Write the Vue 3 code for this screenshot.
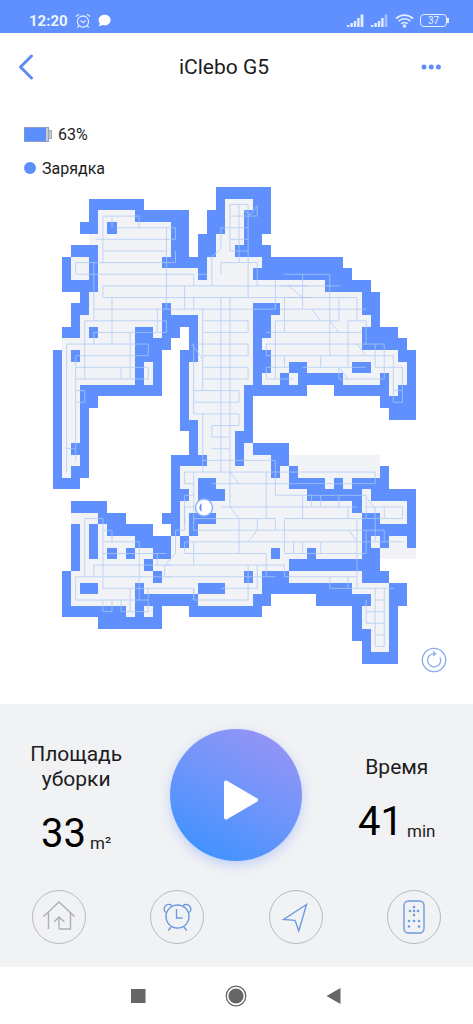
<template>
  <div class="app">
    <div class="status">
      <span class="hora">12:20</span>
      <svg class="alarma" width="16" height="16" viewBox="0 0 16 16">
        <circle cx="8" cy="8.6" r="5.6" />
        <path d="M1 3.6L4 1.2M15 3.6L12 1.2M3.6 13L2.4 14.6M12.4 13L13.6 14.6M5.6 7.6L8 9.6L10.6 7.6" />
      </svg>
      <svg class="chat" width="13" height="13" viewBox="0 0 13 13">
        <path d="M6.7 0.8C10 .8 12.6 3 12.6 6S10 11.4 6.7 11.4C5.9 11.4 5.1 11.3 4.4 11L1 12.4L1.8 9.5C1 8.5.6 7.3.6 6C.6 3 3.4.8 6.7.8z" />
      </svg>
      <div class="statusder">
        <svg v-for="s in senal" :key="s" width="18" height="14" viewBox="0 0 18 14">
          <path class="barra" d="M0 11h2.4v2H0zM3.4 9h2.4v4H3.4zM6.8 7h2.4v6H6.8zM10.2 4h2.4v9h-2.400z" />
          <path class="barra" :class="{ 'tenue': s === 2 }" d="M13.6 0.5h2.8V13h-2.8z" />
        </svg>
        <svg class="wifi" width="19" height="14" viewBox="0 0 19 14">
          <path d="M1 4.6C6 0 13 0 18 4.6M3.6 7.2C7 4 12 4 15.4 7.2M6.2 9.8C8 8 11 8 12.8 9.8" />
          <circle cx="9.5" cy="12" r="1" />
        </svg>
        <span class="pila">37</span>
      </div>
    </div>

    <header class="cabecera">
      <button class="atras" aria-label="Назад">
        <svg width="16" height="26" viewBox="0 0 16 26"><path d="M13.5 2L2.5 13L13.5 24" /></svg>
      </button>
      <h1 class="titulo">iClebo G5</h1>
      <button class="mas" aria-label="Меню">
        <svg width="20" height="6" viewBox="0 0 20 6">
          <circle cx="3" cy="3" r="2.5" />
          <circle cx="10.2" cy="3" r="2.5" />
          <circle cx="17.4" cy="3" r="2.5" />
        </svg>
      </button>
    </header>

    <div class="info">
      <div class="infolinea">
        <svg width="28" height="15" viewBox="0 0 28 15">
          <rect x="0.5" y="0.5" width="24" height="14" fill="#c9cbd0" stroke="#8fa0c8" />
          <rect x="0.5" y="1" width="21.5" height="13" fill="#5b8ffb" />
          <rect x="25" y="3.5" width="2.5" height="8" fill="#d2d2cf" stroke="#a9aaa8" />
        </svg>
        <span>63%</span>
      </div>
      <div class="infolinea">
        <i class="punto"></i>
        <span>Зарядка</span>
      </div>
    </div>

    <main class="mapacont">
      <svg class="mapa" viewBox="0 0 363 477">
        <g transform="scale(9.075 11.634)" shape-rendering="crispEdges">
          <path class="suelo" :d="celdas(suelo)" />
          <path class="pared" :d="celdas(pared)" />
        </g>
        <g transform="scale(9.075 11.634)">
          <path class="ruta" v-for="(r,i) in rutas" :key="i" :d="r" />
        </g>
        <circle cx="151" cy="320.5" r="8.5" fill="#fff" stroke="#8db4f4" stroke-width="1.5" />
        <path d="M148.5 316a6 6 0 0 0 0 9z" fill="#5f90fd" />
      </svg>
      <button class="recargar" aria-label="Обновить">
        <svg width="26" height="26" viewBox="0 0 26 26">
          <circle cx="13" cy="13" r="11.7" />
          <path d="M13 6.6A6.6 6.6 0 1 0 19 10.2M12 4.6L14.6 6.7L12.2 8.8" />
        </svg>
      </button>
    </main>

    <section class="panel">
      <div class="datos">
        <div class="dato">
          <p class="etiqueta">Площадь<br>уборки</p>
          <p class="valor">33<span class="unidad">m²</span></p>
        </div>
        <button class="play" aria-label="Старт">
          <svg width="36" height="42" viewBox="0 0 36 42">
            <path d="M3 3.5L33 21L3 38.5z" />
          </svg>
        </button>
        <div class="dato">
          <p class="etiqueta">Время</p>
          <p class="valor">41<span class="unidad">min</span></p>
        </div>
      </div>

      <div class="acciones">
        <button class="accion gris" aria-label="Домой">
          <svg width="34" height="34" viewBox="0 0 34 34">
            <path d="M1.5 16.5L17 2L32.5 16.5M6.5 12.5V29M17 29H28.5V12.5M17 29V17M12 22L17 17L22.5 22" />
          </svg>
        </button>
        <button class="accion" aria-label="Таймер">
          <svg width="34" height="34" viewBox="0 0 34 34">
            <circle cx="17.5" cy="16.5" r="11.5" />
            <path d="M16.5 9V18H22.5M5.6 12.5A4.3 4.3 0 1 1 12 5.7M29.4 12.5A4.3 4.3 0 1 0 23 5.7M11 27L8.3 30.5M24 27L26.7 30.5" />
          </svg>
        </button>
        <button class="accion" aria-label="Навигация">
          <svg width="34" height="34" viewBox="0 0 34 34">
            <path d="M27.5 4.5L4.5 19.5L16 20.3L19.8 31z" />
          </svg>
        </button>
        <button class="accion" aria-label="Пульт">
          <svg width="34" height="34" viewBox="0 0 34 34">
            <rect x="7" y="1" width="20" height="32" rx="4.5" />
            <circle class="tecla" v-for="(t,i) in teclas" :key="i" :cx="t[0]" :cy="t[1]" r="1.3" />
          </svg>
        </button>
      </div>
    </section>

    <nav class="barranav">
      <button aria-label="Недавние">
        <svg width="22" height="22" viewBox="0 0 22 22"><rect x="4" y="4" width="14.5" height="14" /></svg>
      </button>
      <button aria-label="Главная">
        <svg width="22" height="22" viewBox="0 0 22 22">
          <circle cx="11" cy="11" r="7.6" />
          <circle class="aro" cx="11" cy="11" r="9.8" />
        </svg>
      </button>
      <button aria-label="Назад">
        <svg width="22" height="22" viewBox="0 0 22 22"><path d="M3.5 11L17.5 3V19z" /></svg>
      </button>
    </nav>
  </div>
</template>

<script setup>
import { ref } from "vue";

let senal = ref([1, 2]);

let teclas = ref([
  [17, 7], [17, 11], [17, 15], [13, 11], [21, 11],
  [12, 21], [17, 21], [22, 21], [12, 26.5], [22, 26.5],
]);

// columnas ocupadas en cada fila del mapa (40 x 41)
let pared = ref([
  "18-23",
  "4-9 18 22-23",
  "4 9-14 17-18 21-23",
  "3-4 6 13-14 17-18 21-23",
  "13-14 16-17 21-22",
  "2-4 13-14 16-17 20-23",
  "1 4 12-16 23-31",
  "1 4 16 22-32",
  "1-4 30-34",
  "3 34-35",
  "2-3 12 22-24 34-35",
  "2 12-15 22-23 35",
  "1-2 4 9-10 12-13 15 22-23 34-37",
  "9-12 15 22 34-38",
  "0 2 9-11 14-15 22-23 38-39",
  "0 9 11 14 22-23 26-27 33-34 39",
  "0 9 11 14 22 25 27-31 36 39",
  "0 3-11 14 21-27 31-36 38-39",
  "0 3-4 14 21 36-39",
  "0 3 14 21 37-39",
  "0 3 14-15 21",
  "0 3 15 20-21",
  "0 2-3 15 20 22-25",
  "0 3 13-16 20 24-25",
  "0 2-3 13 24 26 36",
  "0-2 13 16-17 26-29 31 33-36",
  "13-14 16-18 28-33 35-39",
  "2-5 13 33 39",
  "5-7 12-13 15-17 34-35 39",
  "2 4 6-10 13 15 34-39",
  "2 4 9-12 14 34 36 39",
  "2 4 6 8 11-12 24 28 34-35",
  "2 10 26-35",
  "1 11 21 23-25 34-36",
  "1 3-4 9 16-18 23-32 37-38",
  "1 9-15 22-23 29-34 37-38",
  "1-7 9 11 15-22 33 37",
  "5-11 33 37",
  "33-34 37",
  "34 37",
  "34-37",
]);

let suelo = ref([
  "",
  "19-21",
  "5-8 19-20",
  "5-12 19-20",
  "4-12 18-20",
  "5-12 18-19",
  "2-11 17-22",
  "2-15 17-21",
  "5-29",
  "4-33",
  "4-33",
  "3-34",
  "3-11 16-33",
  "1-8 16-33",
  "1-8 16-37",
  "1-10 15-38",
  "1-10 15-38",
  "1-2 15-20 37",
  "1-2 15-20",
  "1-2 15-20",
  "1-2 16-20",
  "1-2 16-19",
  "1 16-21",
  "1-2 17-35",
  "1 14-35",
  "14-32",
  "15-34",
  "14-38",
  "2-4 14-38",
  "3-5 14 16-33",
  "3-8 13-38",
  "3-10 13-39",
  "3-25",
  "2-33",
  "2-15 19-36",
  "2-8 16-21 35-36",
  "8-10 34-36",
  "34-36",
  "35-36",
  "35-36",
]);

// recorrido del robot, por el centro de las celdas
let rutas = ref([
  "M5.5 6.5V2.5H9.5V3.5M7 3.5H13.5V4.5H4.7M5.5 5.5H12.5M6.5 2.5V3.5",
  "M2.5 7.5V6.5H13.5V5.5M2.5 7.5H15.5V8.5M16 7.5H17M5.5 9.5V8.5H28M5.5 9.5H28.5",
  "M4.5 6.5V11.5M4.5 10.5H24.5V8M3.5 16.5V11.5H12.5V12.5H11.5V10.5M12.5 3.5V10.5M6.5 9.5V13.5",
  "M4.5 13.5V12.5H11.5M8.5 12.5V16.5M1.5 24.5V13.5H10.5V14.5H2.5V23.5M2.5 15.5H10.5V16.5H2.5M7.5 15.5V16.5M2.5 17.5H3.5V18.5H2.5M1.5 22.5H2.5",
  "M14.5 8.5V10.5M15.5 9.5V10.5M19.5 4.5V1.5H21.5V9.5M20.5 1.5V6.5M19.5 2.5H22.5V1.6L21.7 2.4L21 2M17.5 8.5V6L18.5 5.3V3.5H21.5M21.5 4.5H19.5V5.5H21.5M18.5 7.5V6.5H22.5V8.5",
  "M16.5 10.5V17.5M18.5 9.5V24.5M19.5 9.5V27.5L20.5 28.5V31.5M16.5 11.5H21.5V12.5H16.5M16 13.5H21.5V14.5H16.5M16.5 15.5H21.5V16.5H16.5M15.5 13.5V19.5M15.5 17.5H20.5V18.5H15.5M15.5 19.5H20.5V20.5H17.5V21.5H19.5M17.5 22.5H19.5M16.5 19.5V24.5M15.3 13.5L16.5 14.8",
  "M25.5 7.5H30.5V14.5M27.5 7.5V10.5M26 8.5L27.5 9.5M25 8.5H31.7M24.5 11.5V16.5M25.5 9.5V12.5M25.5 9.5H33.5V11.5M31.5 9.5V11.5M25 10.5H34.5M24.5 11.5H31.5M23.5 12.5H34",
  "M23.5 14.5V13.5H36.5V15.5M23.5 14.5H37.5V18.5H38.5V15.5H35.5V13.5M25.5 14.5V15.5M23.5 16.5V15.5H26M23.5 16.5H26.5M32.5 15.5V11.5H34.5V13.5M27.5 15.5H34.5M29.5 14.5V15.5M31.5 15.5V16.5H36.5V15.5M31.5 15.5L32.5 16.5M37.5 17.5H38.5",
  "M28.5 10.5L29.5 11.5M30.5 11.5L31.5 12.5M33.5 13.5L34.5 14.5",
  "M16.5 23.5H24.5V26.5H34.5M15.5 25.5H14.5V24.5H35.5V25.5H17.5M23.5 24.5V28.5M18.5 27.5H33.5M19.5 24.5L20.5 25.5M15.5 28.5H24.5V29.5M15.5 29.5H36.5V30.5M22.5 28.5V29.5L21.5 30.5M27.5 26.5V28.5M28.5 26.5V27.5M29.5 26.5V27.5M31.5 26.5V27.5M32.5 27.5V28.5",
  "M25.5 31.5V28.5H38.5V27.5H34.5M36.5 27.5V28.5M34.5 26.5V28.5M35.5 27.5V30.5M34.6 26.7L35.5 27.7M14.5 31.5V30.5H38.5M14.5 31.5H23.5V33.5M25.5 31.5H34.5V29.5M26.5 30.5V31.5M27.5 30.5V31.5M29.5 30.5V31.5M32.6 29.5L33.5 30.5M33.5 28.5V34.5M15.5 24.5V29.5M15.5 30.5V32.5M14.5 29V27.5H15.5",
  "M12.5 32.5H25.5V33.5H33.5M12.5 33.5H24.5M22.5 32.5V34.5H18.5M21.5 32.5V35.5H15.5V34.5M30.5 33.5V34.5H37.6M32.5 33.5V34.5M35.5 34.5V39.5H36.5V34.5M35.5 35.5H36.5M34.5 36.5H36.5M34.5 37.5H36.5M34.5 35.5V37.5M35.5 38.5H36.5",
  "M3.5 33.5V28.5H5.5V34.5H15.5V35.5M5.5 29.5H6.5V30.5M5.5 30.5H9.5V35.5M5.5 31.5H12.5M4.5 33.5V32.5H13M2.5 33.5V35.5H10.5V34.5M2.5 33.5H13M10.5 35.5V36.5H8.5V34.5M5.5 35.5V36.5H6.5V35.5M7.5 35.5V36.5H8.5M11.5 31.5V32.5M12.3 33.5V32.5L13.5 31.5V29.5H14.5V26.5H15.5",
]);

function celdas(filas) {
  let d = ""
  filas.forEach((fila, y) => {
    fila.split(" ").filter(t => t).forEach(t => {
      let [a, b] = t.split("-").map(Number)
      let ancho = (b ?? a) - a + 1
      d += `M${a} ${y}h${ancho}v1h${-ancho}z`
    })
  })
  return d
}
</script>

<style>
body {
  margin: 0;
  background-color: #ffffff;
}
</style>

<style scoped>
* {
  box-sizing: border-box;
}

.app {
  display: flex;
  flex-direction: column;
  min-height: 100vh;
  font-family: Roboto, "Liberation Sans", sans-serif;
  color: #1c1c1e;
  background-color: #ffffff;
}

button {
  border: none;
  padding: 0;
  background: none;
  display: flex;
  align-items: center;
  justify-content: center;
  cursor: pointer;
}

p, h1 {
  margin: 0;
  font-weight: normal;
}

svg {
  display: block;
  fill: none;
}

.status {
  display: flex;
  align-items: center;
  height: 33px;
  padding: 8px 26px 0 29px;
  background-color: #608ffe;
  color: #eef4ff;
}

.hora {
  font-size: 15px;
  font-weight: 700;
}

.alarma {
  margin-left: 7px;
  stroke: #dce8ff;
  stroke-width: 1.3;
}

.chat {
  margin-left: 7px;
  fill: #ffffff;
}

.statusder {
  display: flex;
  align-items: center;
  gap: 6px;
  margin-left: auto;
}

.barra {
  fill: #e4edff;
}

.tenue {
  opacity: 0.5;
}

.wifi {
  stroke: #e4edff;
  stroke-width: 1.6;
}

.pila {
  position: relative;
  width: 27px;
  height: 13px;
  border: 1px solid #e4edff;
  border-radius: 4px;
  font-size: 10px;
  line-height: 11px;
  text-align: center;
}

.pila::after {
  content: "";
  position: absolute;
  right: -3px;
  top: 3px;
  width: 2px;
  height: 5px;
  background-color: #e4edff;
}

.cabecera {
  display: flex;
  align-items: center;
  height: 68px;
  padding: 0 23px 0 16px;
}

.atras {
  width: 20px;
  height: 40px;
}

.atras path {
  stroke: #5b8df5;
  stroke-width: 3;
  stroke-linecap: round;
  stroke-linejoin: round;
}

.titulo {
  flex: 1;
  text-align: center;
  font-size: 21px;
}

.mas {
  width: 38px;
  height: 40px;
}

.mas circle {
  fill: #5f8dfa;
}

.info {
  display: flex;
  flex-direction: column;
  gap: 14px;
  padding: 23px 24px 9px;
  font-size: 16px;
}

.infolinea {
  display: flex;
  align-items: center;
  gap: 6px;
  height: 20px;
}

.punto {
  width: 12px;
  height: 12px;
  border-radius: 50%;
  background-color: #5b8ffb;
}

.mapacont {
  position: relative;
  padding: 0 57px 40px 53px;
}

.mapa {
  width: 100%;
}

.suelo {
  fill: #f2f3f7;
}

.pared {
  fill: #5f90fd;
}

.ruta {
  stroke: #aecbf5;
  stroke-width: 1;
  opacity: 0.75;
  vector-effect: non-scaling-stroke;
}

.recargar {
  position: absolute;
  right: 26px;
  bottom: 31px;
}

.recargar svg {
  stroke: #8aabec;
  stroke-width: 1.3;
}

.panel {
  padding: 25px 0 23px;
  background-color: #f1f2f4;
}

.datos {
  display: grid;
  grid-template-columns: 1fr 1fr 1fr;
  column-gap: 8px;
  align-items: center;
  justify-items: center;
}

.dato {
  display: flex;
  flex-direction: column;
  gap: 18px;
  padding-top: 10px;
  text-align: center;
}

.etiqueta {
  font-size: 21px;
  line-height: 25px;
}

.valor {
  display: flex;
  align-items: flex-end;
  justify-content: center;
  gap: 4px;
  font-size: 40px;
  line-height: 48px;
  color: #000000;
}

.unidad {
  font-size: 17px;
  line-height: 30px;
  color: #1c1c1e;
}

.play {
  width: 132px;
  height: 132px;
  padding: 10px 0 0 10px;
  border-radius: 50%;
  background: linear-gradient(210deg, #9594f5 10%, #6d95fb 50%, #4292ff 88%);
  box-shadow: 0 4px 12px rgba(96, 143, 254, 0.35);
}

.play path {
  fill: #ffffff;
  stroke: #ffffff;
  stroke-width: 4;
  stroke-linejoin: round;
}

.acciones {
  display: flex;
  justify-content: space-around;
  margin-top: 29px;
}

.accion {
  width: 54px;
  height: 54px;
  border: 1px solid #b9babd;
  border-radius: 50%;
}

.accion svg {
  stroke: #6d9be0;
  stroke-width: 1.4;
}

.gris svg {
  stroke: #aeb0b4;
}

.accion .tecla {
  fill: #6d9be0;
  stroke: none;
}

.barranav {
  flex: 1;
  display: flex;
  align-items: center;
  justify-content: center;
  gap: 76px;
  min-height: 57px;
  padding-right: 2px;
}

.barranav svg {
  fill: #666666;
}

.barranav .aro {
  fill: none;
  stroke: #666666;
  stroke-width: 1.3;
}
</style>
